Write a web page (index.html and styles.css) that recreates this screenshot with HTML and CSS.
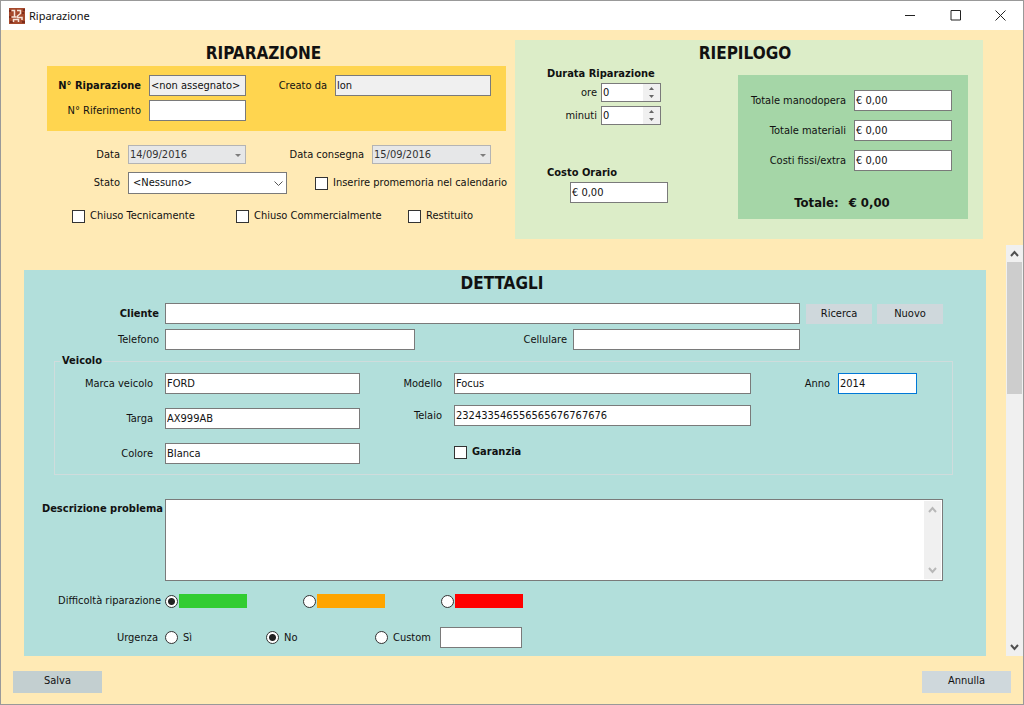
FILE: index.html
```html
<!DOCTYPE html>
<html lang="it">
<head>
<meta charset="utf-8">
<title>Riparazione</title>
<link rel="stylesheet" href="styles.css">
</head>
<body>
<div class="window">
  <header class="titlebar">
    <svg class="app-icon" viewBox="0 0 16 16" aria-hidden="true">
      <rect width="16" height="16" fill="#a5492c"/>
      <path d="M0 3h2M0 9h2M14 2h2M1 14h3M13 14h3M13 5h2" stroke="#7d2c1c" stroke-width="2"/>
      <path d="M2.500 2.500h3v6M2.500 9h5M8 2.500h3.500v3L8.500 8v1.500H13V12M4.500 14v-2.500h5V14" fill="none" stroke="#f6e3d8" stroke-width="1.500"/>
    </svg>
    <h1 class="titlebar-text">Riparazione</h1>
    <div class="window-controls">
      <button class="window-button" type="button" aria-label="Riduci a icona"><svg viewBox="0 0 11 11"><path d="M0 5.500h10" /></svg></button>
      <button class="window-button" type="button" aria-label="Ingrandisci"><svg viewBox="0 0 11 11"><path d="M1 .5h9.500v9.500H1z" /></svg></button>
      <button class="window-button" type="button" aria-label="Chiudi"><svg viewBox="0 0 11 11"><path d="M.5.5l10 10M10.500.5l-10 10" /></svg></button>
    </div>
  </header>

  <form class="form">
    <div class="summary">
      <section class="repair">
        <h2 class="heading heading-repair">RIPARAZIONE</h2>
        <div class="id-box">
          <label class="label strong" for="numero">N° Riparazione</label>
          <input class="field readonly" id="numero" type="text" value="&lt;non assegnato&gt;" readonly>
          <label class="label" for="creato">Creato da</label>
          <input class="field readonly" id="creato" type="text" value="lon" readonly>
          <label class="label" for="riferimento">N° Riferimento</label>
          <input class="field" id="riferimento" type="text">
        </div>
        <div class="dates">
          <label class="label" for="data">Data</label>
          <div class="combo">
            <select class="field disabled" id="data" disabled><option>14/09/2016</option></select>
            <svg class="combo-arrow" viewBox="0 0 9 9"><path class="solid" d="M2 3h6L5 6z"/></svg>
          </div>
          <label class="label" for="consegna">Data consegna</label>
          <div class="combo">
            <select class="field disabled" id="consegna" disabled><option>15/09/2016</option></select>
            <svg class="combo-arrow" viewBox="0 0 9 9"><path class="solid" d="M2 3h6L5 6z"/></svg>
          </div>
        </div>
        <div class="state">
          <label class="label" for="stato">Stato</label>
          <div class="combo">
            <select class="field tall" id="stato"><option>&lt;Nessuno&gt;</option></select>
            <svg class="combo-arrow" viewBox="0 0 9 9"><path class="line" d="M.5 2.500l4 4 4-4"/></svg>
          </div>
          <label class="check"><input type="checkbox">Inserire promemoria nel calendario</label>
        </div>
        <div class="closing">
          <label class="check"><input type="checkbox">Chiuso Tecnicamente</label>
          <label class="check"><input type="checkbox">Chiuso Commercialmente</label>
          <label class="check"><input type="checkbox">Restituito</label>
        </div>
      </section>

      <section class="recap">
        <h2 class="heading heading-recap">RIEPILOGO</h2>
        <div class="recap-body">
          <div class="costs">
            <h3 class="subheading">Durata Riparazione</h3>
            <div class="duration">
              <label class="label" for="ore">ore</label>
              <div class="spinner">
                <input class="spinner-input" id="ore" type="text" inputmode="numeric" value="0">
                <div class="spinner-buttons">
                  <button type="button" aria-label="Aumenta ore"><svg viewBox="0 0 7 4"><path d="M0 4h7L3.500 0z"/></svg></button>
                  <button type="button" aria-label="Diminuisci ore"><svg viewBox="0 0 7 4"><path d="M0 0h7L3.500 4z"/></svg></button>
                </div>
              </div>
              <label class="label" for="minuti">minuti</label>
              <div class="spinner">
                <input class="spinner-input" id="minuti" type="text" inputmode="numeric" value="0">
                <div class="spinner-buttons">
                  <button type="button" aria-label="Aumenta minuti"><svg viewBox="0 0 7 4"><path d="M0 4h7L3.500 0z"/></svg></button>
                  <button type="button" aria-label="Diminuisci minuti"><svg viewBox="0 0 7 4"><path d="M0 0h7L3.500 4z"/></svg></button>
                </div>
              </div>
            </div>
            <label class="subheading hourly-label" for="orario">Costo Orario</label>
            <input class="field hourly" id="orario" type="text" value="€ 0,00">
          </div>
          <div class="totals">
            <div class="totals-grid">
              <label class="label" for="manodopera">Totale manodopera</label>
              <input class="field" id="manodopera" type="text" value="€ 0,00">
              <label class="label" for="materiali">Totale materiali</label>
              <input class="field" id="materiali" type="text" value="€ 0,00">
              <label class="label" for="extra">Costi fissi/extra</label>
              <input class="field" id="extra" type="text" value="€ 0,00">
            </div>
            <p class="grand-total"><span>Totale:</span><output>€ 0,00</output></p>
          </div>
        </div>
      </section>
    </div>

    <div class="scroll-area">
      <section class="details">
        <h2 class="heading heading-details">DETTAGLI</h2>
        <div class="detail-row">
          <label class="label strong" for="cliente">Cliente</label>
          <input class="field" id="cliente" type="text">
          <div class="client-actions">
            <button class="button" type="button">Ricerca</button>
            <button class="button" type="button">Nuovo</button>
          </div>
        </div>
        <div class="detail-row phones">
          <label class="label" for="telefono">Telefono</label>
          <input class="field" id="telefono" type="text">
          <label class="label" for="cellulare">Cellulare</label>
          <input class="field" id="cellulare" type="text">
        </div>

        <fieldset class="vehicle">
          <legend>Veicolo</legend>
          <div class="vehicle-columns">
            <div class="vehicle-column first">
              <label class="label" for="marca">Marca veicolo</label>
              <input class="field" id="marca" type="text" value="FORD">
              <label class="label" for="targa">Targa</label>
              <input class="field" id="targa" type="text" value="AX999AB">
              <label class="label" for="colore">Colore</label>
              <input class="field" id="colore" type="text" value="BIanca">
            </div>
            <div class="vehicle-column second">
              <label class="label" for="modello">Modello</label>
              <input class="field" id="modello" type="text" value="Focus">
              <label class="label" for="telaio">Telaio</label>
              <input class="field" id="telaio" type="text" value="232433546556565676767676">
              <label class="check strong warranty"><input type="checkbox">Garanzia</label>
            </div>
            <div class="vehicle-column third">
              <label class="label" for="anno">Anno</label>
              <input class="field focused" id="anno" type="text" value="2014">
            </div>
          </div>
        </fieldset>

        <div class="description">
          <label class="label strong" for="descrizione">Descrizione problema</label>
          <div class="memo">
            <textarea id="descrizione"></textarea>
            <div class="memo-scroll" aria-hidden="true">
              <svg viewBox="0 0 9 9"><path d="M1 7l3.500-4L8 7"/></svg>
              <svg viewBox="0 0 9 9"><path d="M1 2l3.500 4L8 2"/></svg>
            </div>
          </div>
        </div>

        <div class="choices difficulty" role="radiogroup" aria-labelledby="difficolta">
          <span class="label" id="difficolta">Difficoltà riparazione</span>
          <label class="radio"><input type="radio" name="difficolta" aria-label="Bassa" checked><span class="swatch low"></span></label>
          <label class="radio"><input type="radio" name="difficolta" aria-label="Media"><span class="swatch medium"></span></label>
          <label class="radio"><input type="radio" name="difficolta" aria-label="Alta"><span class="swatch high"></span></label>
        </div>
        <div class="choices urgency" role="radiogroup" aria-labelledby="urgenza">
          <span class="label" id="urgenza">Urgenza</span>
          <label class="radio"><input type="radio" name="urgenza">Sì</label>
          <label class="radio"><input type="radio" name="urgenza" checked>No</label>
          <label class="radio"><input type="radio" name="urgenza">Custom</label>
          <input class="field" type="text" aria-label="Urgenza custom">
        </div>
      </section>
      <div class="scrollbar" aria-hidden="true">
        <svg viewBox="0 0 9 9"><path d="M1 7l3.500-4L8 7"/></svg>
        <div class="scrollbar-track"><div class="scrollbar-thumb"></div></div>
        <svg viewBox="0 0 9 9"><path d="M1 2l3.500 4L8 2"/></svg>
      </div>
    </div>

    <footer class="footer">
      <button class="button save" type="button">Salva</button>
      <button class="button" type="button">Annulla</button>
    </footer>
  </form>
</div>
</body>
</html>
```
FILE: styles.css
```css
* {
  box-sizing: border-box;
}

body {
  margin: 0;
  font-family: "DejaVu Sans Condensed", Tahoma, "DejaVu Sans", sans-serif;
  font-size: 11px;
  line-height: 14px;
  color: #111;
}

h1, h2, h3, p {
  margin: 0;
}

input, select, textarea, button {
  font: inherit;
  color: inherit;
  margin: 0;
}

.window {
  display: flex;
  flex-direction: column;
  min-height: 100vh;
  border: 1px solid #999;
  background: #ffeab5;
}

/* Title bar */
.titlebar {
  display: flex;
  align-items: center;
  height: 29px;
  padding-left: 8px;
  background: #fff;
}

.app-icon {
  width: 16px;
  height: 16px;
}

.titlebar-text {
  flex: 1;
  margin-left: 4px;
  font-family: "Noto Sans", sans-serif;
  font-size: 11px;
  font-weight: 400;
}

.window-controls {
  display: flex;
}

.window-button {
  display: grid;
  place-items: center;
  width: 45px;
  height: 29px;
  padding: 0;
  border: 0;
  background: none;
}

.window-button svg {
  width: 11px;
  height: 11px;
  fill: none;
  stroke: #222;
}

/* Shared controls */
.form {
  display: flex;
  flex: 1;
  flex-direction: column;
}

.heading {
  font-size: 17px;
  line-height: 26px;
  text-align: center;
}

.label {
  padding-right: 8px;
  text-align: right;
  white-space: nowrap;
}

.strong,
.subheading {
  font-size: 11px;
  font-weight: 700;
}

.field {
  display: block;
  width: 100%;
  min-width: 0;
  height: 21px;
  padding: 0 1px;
  border: 1px solid #7a7a7a;
  border-radius: 0;
  background: #fff;
  outline: 0;
  appearance: none;
}

.readonly {
  background: #f0f0f0;
}

.disabled {
  height: 19px;
  border-color: #b4b4b4;
  background: #e6e7e8;
  color: #333;
  opacity: 1;
}

.tall {
  height: 22px;
  padding-left: 4px;
}

.focused {
  border-color: #0078d7;
}

.combo {
  position: relative;
}

.combo-arrow {
  position: absolute;
  top: 50%;
  right: 4px;
  width: 9px;
  height: 9px;
  margin-top: -4px;
  pointer-events: none;
}

.combo-arrow .solid {
  fill: #7d7d7d;
}

.combo-arrow .line {
  fill: none;
  stroke: #555;
}

.check,
.radio {
  display: flex;
  align-items: center;
  gap: 5px;
  white-space: nowrap;
}

.check input,
.radio input {
  flex: none;
  width: 13px;
  height: 13px;
  border: 1px solid #333;
  background: #fff;
  appearance: none;
}

.check input:checked {
  background: #333;
  box-shadow: inset 0 0 0 2px #fff;
}

.radio input {
  border-radius: 50%;
}

.radio input:checked {
  background: radial-gradient(circle, #222 3px, #fff 4px);
}

.button {
  height: 20px;
  padding: 0 4px;
  border: 0;
  background: #cfd8dc;
}

/* Repair header */
.summary {
  display: grid;
  grid-template-columns: minmax(0, 459fr) minmax(0, 468fr);
  gap: 9px;
  padding: 10px 40px 0 46px;
}

.heading-repair {
  padding-right: 26px;
}

.id-box {
  display: grid;
  grid-template-columns: 102px 97px 89px 1fr;
  gap: 4px 0;
  align-items: center;
  padding: 9px 15px 10px 0;
  background: #ffd54f;
}

.dates {
  display: grid;
  grid-template-columns: 81px 118px 126px 1fr;
  align-items: center;
  padding: 14px 15px 0 0;
}

.state {
  display: grid;
  grid-template-columns: 81px 159px 1fr;
  align-items: center;
  margin-top: 8px;
}

.state .check {
  padding-left: 28px;
}

.closing {
  display: grid;
  grid-template-columns: 164px 172px 1fr;
  margin-top: 15px;
  padding-left: 25px;
}

/* Totals */
.recap {
  padding-bottom: 20px;
  background: #dcedc8;
}

.heading-recap {
  padding-right: 8px;
}

.recap-body {
  display: flex;
  justify-content: space-between;
  padding: 0 15px 0 32px;
}

.subheading {
  display: block;
  line-height: 16px;
}

.duration {
  display: grid;
  grid-template-columns: 54px 60px;
  gap: 4px 0;
  align-items: center;
  margin-top: 1px;
}

.duration .label {
  padding-right: 4px;
}

.spinner {
  display: flex;
  height: 19px;
  border: 1px solid #7a7a7a;
  background: #fff;
}

.spinner-input {
  flex: 1;
  min-width: 0;
  padding: 0 1px;
  border: 0;
  background: none;
}

.spinner-buttons {
  display: grid;
  width: 17px;
  background: #f0f0f0;
}

.spinner-buttons button {
  display: grid;
  place-items: center;
  padding: 0;
  border: 0;
  background: none;
}

.spinner-buttons svg {
  width: 5px;
  height: 3px;
  fill: #666;
}

.hourly-label {
  margin-top: 40px;
}

.hourly {
  width: 98px;
  margin: 1px 0 0 23px;
}

.totals {
  width: 230px;
  margin-top: 9px;
  padding: 15px 16px 9px 0;
  background: #a5d6a7;
}

.totals-grid {
  display: grid;
  grid-template-columns: 1fr 98px;
  gap: 9px 0;
  align-items: center;
}

.grand-total {
  display: flex;
  justify-content: center;
  gap: 10px;
  margin-top: 24px;
  padding-right: 6px;
  font-size: 13px;
  font-weight: 700;
  line-height: 15px;
}

/* Details */
.scroll-area {
  display: flex;
  flex: 1;
  gap: 20px;
  margin-top: 6px;
  padding-left: 23px;
}

.details {
  flex: 1;
  margin-top: 25px;
  padding-bottom: 8px;
  background: #b2dfdb;
}

.heading-details {
  padding-right: 6px;
}

.detail-row {
  display: grid;
  grid-template-columns: 141px 1fr 143px;
  align-items: center;
  margin-top: 7px;
  padding-right: 43px;
}

.detail-row .label {
  padding-right: 6px;
}

.client-actions {
  display: grid;
  grid-template-columns: 1fr 1fr;
  gap: 5px;
  padding-left: 6px;
}

.phones {
  grid-template-columns: 141px 250fr 158px 227fr;
  margin-top: 5px;
  padding-right: 186px;
}

.vehicle {
  margin: 4px 33px 0 30px;
  padding: 5px 35px 10px 0;
  border: 1px solid #cfdcdc;
}

.vehicle legend {
  margin-left: 5px;
  padding: 0 2px;
  font-weight: 700;
  line-height: 14px;
}

.vehicle-columns {
  display: grid;
  grid-template-columns: 305fr 391fr 166fr;
  align-items: start;
}

.vehicle-column {
  display: grid;
  grid-template-columns: 94px 1fr;
  align-items: center;
}

.first {
  grid-template-columns: 110px 1fr;
  gap: 14px 0;
}

.first .label,
.second .label {
  padding-right: 12px;
}

.second {
  gap: 11px 0;
}

.third {
  grid-template-columns: 87px 1fr;
}

.vehicle-column .warranty {
  grid-column: 2;
  margin-top: 8px;
}

.description {
  display: grid;
  grid-template-columns: 141px 1fr;
  margin-top: 24px;
  padding-right: 43px;
}

.description .label {
  padding: 3px 2px 0 0;
}

.memo {
  display: flex;
  height: 82px;
  padding: 1px;
  border: 1px solid #7a7a7a;
  background: #fff;
}

.memo textarea {
  flex: 1;
  padding: 2px;
  border: 0;
  outline: 0;
  resize: none;
}

.memo-scroll,
.scrollbar {
  display: flex;
  flex-direction: column;
  justify-content: space-between;
  align-items: center;
  width: 17px;
  padding: 4px 0;
  background: #f0f0f0;
}

.memo-scroll svg,
.scrollbar svg {
  width: 9px;
  height: 9px;
  fill: none;
  stroke: #b8b8b8;
  stroke-width: 2;
}

.scrollbar svg {
  stroke: #505050;
}

.scrollbar-track {
  flex: 1;
  width: 15px;
  margin: 4px 0;
}

.scrollbar-thumb {
  height: 35%;
  background: #cdcdcd;
}

.choices {
  display: grid;
  align-items: center;
}

.choices .label {
  padding-right: 4px;
}

.difficulty {
  grid-template-columns: 141px 138px 138px 1fr;
  margin-top: 13px;
}

.difficulty .radio {
  gap: 1px;
}

.swatch {
  width: 68px;
  height: 14px;
}

.low {
  background: #32cd32;
}

.medium {
  background: #ffa500;
}

.high {
  background: #f00;
}

.urgency {
  grid-template-columns: 141px 101px 109px 65px 82px;
  margin-top: 19px;
}

.urgency .label {
  padding-right: 7px;
}

/* Bottom actions */
.footer {
  display: flex;
  justify-content: space-between;
  padding: 15px 12px 11px;
}

.footer .button {
  width: 89px;
  height: 22px;
  padding-bottom: 2px;
}

.footer .save {
  background: #c3cfd0;
}
```
